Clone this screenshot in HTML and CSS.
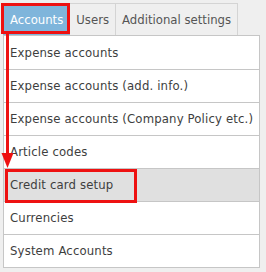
FILE: index.html
```html
<!DOCTYPE html>
<html lang="en">
<head>
    <meta charset="UTF-8">
    <title>Settings</title>
    <link rel="stylesheet" href="styles.css">
</head>
<body>
<div class="page">
    <ul class="tabs">
        <li class="tab active">Accounts</li>
        <li class="tab">Users</li>
        <li class="tab">Additional settings</li>
    </ul>
    <ul class="menu">
        <li>Expense accounts</li>
        <li>Expense accounts (add. info.)</li>
        <li>Expense accounts (Company Policy etc.)</li>
        <li>Article codes</li>
        <li class="current">Credit card setup</li>
        <li>Currencies</li>
        <li>System Accounts</li>
    </ul>

    <!-- annotations -->
    <div class="mark mark-tab"></div>
    <div class="mark mark-row"></div>
    <svg class="arrow" width="16" height="140" viewBox="0 0 16 140">
        <rect x="6" y="0" width="3" height="121" fill="#ee1111"/>
        <polygon points="1.5,119 13.5,119 7.5,134" fill="#ee1111"/>
    </svg>
</div>
</body>
</html>
```

FILE: styles.css
```css
* {
    margin: 0;
    padding: 0;
}

body {
    background: #efefef;
    font-family: "DejaVu Sans Condensed", "DejaVu Sans", sans-serif;
    font-size: 12px;
    color: #3e3e3e;
}

.page {
    position: relative;
    padding: 3px 0 0 3px;
    height: 269px;
}

.tabs {
    list-style: none;
    display: flex;
}

.tab {
    height: 31px;
    line-height: 31px;
    padding: 0 6px;
    border: 1px solid #d4d4d4;
    border-left: none;
    border-bottom: none;
    background: #efefef;
    color: #555;
    font-size: 13px;
}

.tab:first-child {
    border-left: 1px solid #d4d4d4;
}

.tab.active {
    background: #7fb5db;
    border-color: #7fb5db;
    color: #fff;
}

.menu {
    list-style: none;
    width: 255px;
    border: 1px solid #c6c6c6;
    background: #fff;
}

.menu li {
    height: 32px;
    line-height: 32px;
    padding-left: 6px;
    border-top: 1px solid #c6c6c6;
    font-size: 13px;
    letter-spacing: 0.15px;
    white-space: nowrap;
}

.menu li:first-child {
    border-top: none;
    height: 33px;
    line-height: 33px;
}

.menu li.current {
    background: #e0e0e0;
}

.mark {
    position: absolute;
    border: 3px solid #ee1111;
}

.mark-tab {
    left: 1px;
    top: 3px;
    width: 63px;
    height: 25px;
}

.mark-row {
    left: 5px;
    top: 169px;
    width: 126px;
    height: 28px;
}

.arrow {
    position: absolute;
    left: 0;
    top: 34px;
}
```
